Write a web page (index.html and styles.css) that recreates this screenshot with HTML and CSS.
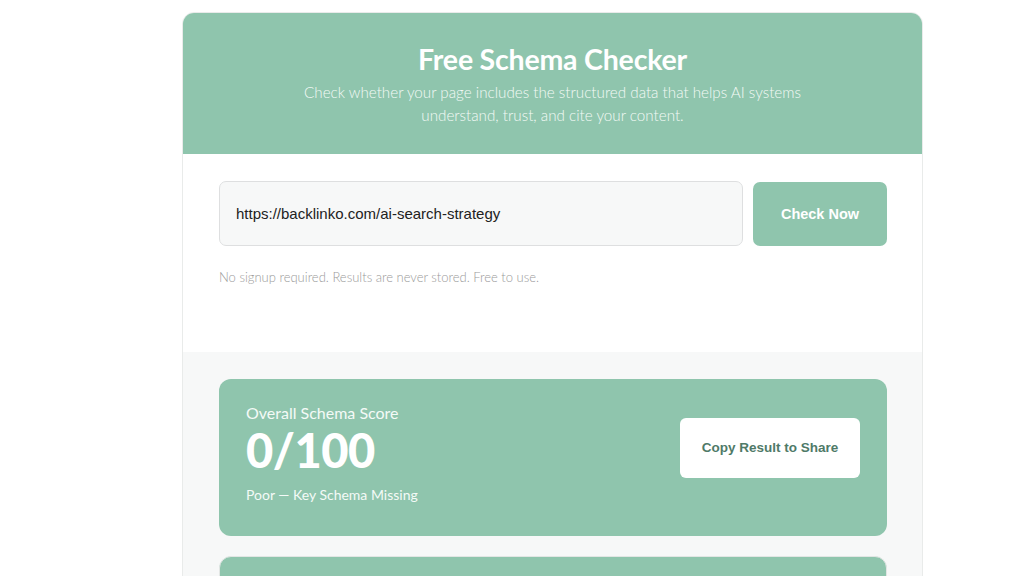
FILE: index.html
```html
<!DOCTYPE html>
<html lang="en">
<head>
<meta charset="utf-8">
<title>Free Schema Checker</title>
<link rel="stylesheet" href="styles.css">
</head>
<body>
<main class="tool">
  <header class="tool-header">
    <h1 class="tool-title">Free Schema Checker</h1>
    <p class="tool-sub">Check whether your page includes the structured data that helps AI systems understand, trust, and cite your content.</p>
  </header>
  <section class="tool-form">
    <div class="form-row">
      <input class="url-input" type="text" value="https://backlinko.com/ai-search-strategy">
      <button class="check-btn">Check Now</button>
    </div>
    <p class="form-note">No signup required. Results are never stored. Free to use.</p>
  </section>
  <section class="results">
    <div class="score-card">
      <div class="score-info">
        <div class="score-label">Overall Schema Score</div>
        <div class="score-value">0/100</div>
        <div class="score-status">Poor — Key Schema Missing</div>
      </div>
      <button class="copy-btn">Copy Result to Share</button>
    </div>
    <div class="next-card"></div>
  </section>
</main>
</body>
</html>
```

FILE: styles.css
```css
html, body {
  margin: 0;
  padding: 0;
  background: #ffffff;
  overflow: hidden;
  height: 576px;
}
body {
  font-family: "Lato", "Noto Sans", sans-serif;
}
.tool {
  width: 739px;
  margin: 12px 0 0 182px;
  border: 1px solid #e9ebea;
  border-radius: 12px;
  overflow: hidden;
  background: #ffffff;
}
.tool-header {
  background: #8fc5ad;
  height: 141px;
  box-sizing: border-box;
  padding-top: 29px;
  text-align: center;
  color: #ffffff;
}
.tool-title {
  margin: 0;
  font-size: 28.5px;
  font-weight: 700;
  line-height: 34px;
  letter-spacing: -0.2px;
}
.tool-sub {
  margin: 5px auto 0;
  width: 520px;
  font-size: 15.2px;
  font-weight: 300;
  line-height: 23px;
  color: #f3faf6;
}
.tool-form {
  height: 198px;
  box-sizing: border-box;
  padding: 27px 35px 0 36px;
}
.form-row {
  display: flex;
  gap: 10px;
  align-items: flex-start;
}
.url-input {
  flex: 1;
  height: 65px;
  box-sizing: border-box;
  border: 1px solid #dedfe0;
  border-radius: 7px;
  background: #f7f8f8;
  padding: 0 16px;
  font-family: "Liberation Sans", Arial, sans-serif;
  font-size: 15px;
  color: #222222;
  outline: none;
}
.check-btn {
  width: 134px;
  height: 64px;
  margin-top: 1px;
  border: none;
  border-radius: 7px;
  background: #8fc5ad;
  color: #ffffff;
  font-family: "Liberation Sans", Arial, sans-serif;
  font-size: 14.5px;
  font-weight: 700;
}
.form-note {
  margin: 23px 0 0;
  font-size: 13px;
  font-weight: 300;
  color: #9a9a9a;
}
.results {
  background: #f7f8f8;
  padding: 27px 35px 0 36px;
  height: 300px;
  display: flex;
  flex-direction: column;
  gap: 20px;
}
.score-card {
  background: #8fc5ad;
  border-radius: 12px;
  height: 157px;
  box-sizing: border-box;
  padding: 0 27px 0 27px;
  display: flex;
  align-items: center;
  justify-content: space-between;
  color: #ffffff;
}
.score-info {
  margin-top: -8px;
}
.score-label {
  font-size: 16px;
  line-height: 20px;
  color: #f4faf7;
}
.score-value {
  font-size: 47px;
  font-weight: 900;
  line-height: 56px;
  margin-top: -1px;
  letter-spacing: -0.5px;
}
.score-status {
  margin-top: 8px;
  font-size: 14px;
  line-height: 18px;
  color: #f4faf7;
}
.copy-btn {
  width: 180px;
  height: 60px;
  margin-top: -20px;
  border: none;
  border-radius: 6px;
  background: #ffffff;
  color: #4f7a68;
  font-family: "Liberation Sans", Arial, sans-serif;
  font-size: 13.5px;
  font-weight: 700;
}
.next-card {
  background: #8fc5ad;
  border-radius: 12px;
  height: 120px;
  border: 1px solid #e2e6e4;
}
```
